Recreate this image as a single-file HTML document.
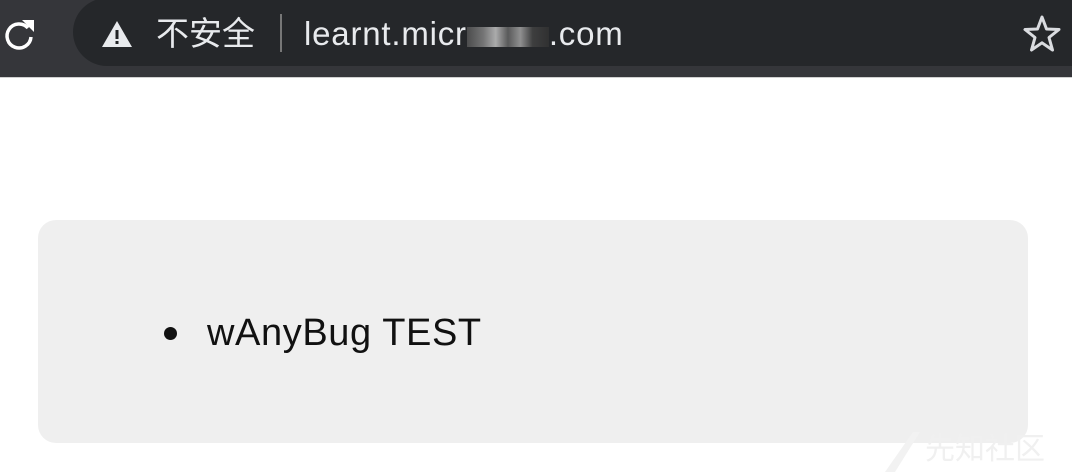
<!DOCTYPE html>
<html><head><meta charset="utf-8"><style>
body{margin:0;width:1072px;height:472px;background:#fff;overflow:hidden;position:relative;font-family:"Liberation Sans","Noto Sans CJK SC",sans-serif}
.bar{position:absolute;left:0;top:0;width:1072px;height:77px;background:#35363a;border-bottom:1px solid #d0d0d0}
.omni{position:absolute;left:73px;top:-2px;width:1060px;height:68px;border-radius:34px;background:#25272a}
.t{position:absolute;color:#e8eaed;font-size:33px;top:14px;line-height:40px}
.sep{position:absolute;left:280px;top:14px;width:2px;height:38px;background:#777}
.box{position:absolute;left:38px;top:220px;width:990px;height:223px;background:#efefef;border-radius:18px}
.item{position:absolute;left:207px;top:311px;font-size:38px;color:#111;line-height:44px;letter-spacing:0.6px}
.dot{position:absolute;left:164px;top:327px;width:13px;height:13px;border-radius:50%;background:#111}
.wm{position:absolute;left:925px;top:432px;font-size:30px;color:#f0f0f0;line-height:36px}
.blur{display:inline-block;width:82px;height:20px;vertical-align:-2px;background:linear-gradient(90deg,#555 0,#888 20%,#ccc 35%,#666 50%,#aaa 65%,#444 80%,#333 100%);opacity:.8}
</style></head><body>
<div class="bar">
<div class="omni"></div>
<svg style="position:absolute;left:0;top:14px" width="40" height="40" viewBox="0 0 40 40"><path d="M28 14 A12 12 0 1 0 31 23" fill="none" stroke="#fff" stroke-width="3.5"/><path d="M22 6 L34 6 L34 18 Z" fill="#fff"/></svg>
<svg style="position:absolute;left:101px;top:18px" width="32" height="32" viewBox="0 0 32 32"><path d="M16 3 L31 29 L1 29 Z" fill="#e8eaed"/><rect x="14.5" y="12" width="3" height="9" fill="#202124"/><rect x="14.5" y="23" width="3" height="3" fill="#202124"/></svg>
<div class="t" style="left:156px">不安全</div>
<div class="sep"></div>
<div class="t" style="left:304px;letter-spacing:0.8px">learnt.micr<span class="blur"></span>.com</div>
<svg style="position:absolute;left:1022px;top:14px" width="40" height="40" viewBox="0 0 40 40"><path d="M20 3 L24.5 15 L37 15.5 L27 23.5 L30.5 36 L20 28.8 L9.5 36 L13 23.5 L3 15.5 L15.5 15 Z" fill="none" stroke="#dadce0" stroke-width="3" stroke-linejoin="round"/></svg>
</div>
<div class="box"></div>
<div class="dot"></div>
<div class="item">wAnyBug TEST</div>
<svg style="position:absolute;left:885px;top:432px" width="35" height="40"><path d="M28 0 L35 0 L10 40 L0 40 Z" fill="#f2f2f2"/></svg>
<div class="wm">先知社区</div>
</body></html>
